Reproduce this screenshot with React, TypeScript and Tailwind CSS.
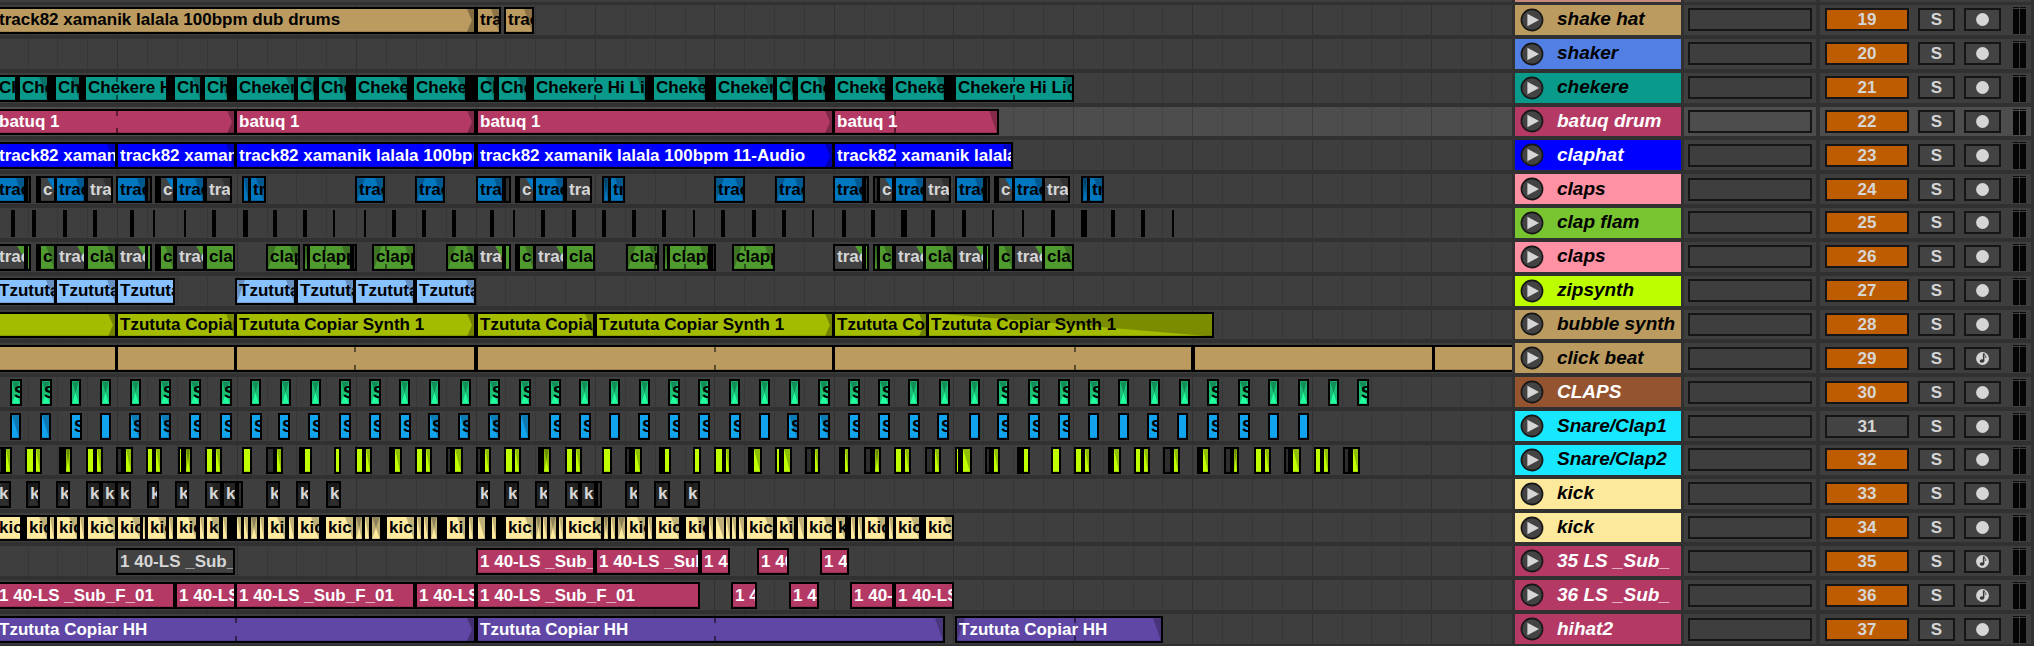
type Fade = "" | "x" | "r" | "l" | "lr" | "long" | "cut";
// left edge, right edge, tone, label, fade
type Clip = [number, number, string, string?, Fade?];

interface Track {
  number: number;
  name: string;
  header: string;
  clips: Clip[];
  gaps?: [number, number][];
  notches?: number[];
  muted?: boolean;
  midi?: boolean;
  selected?: boolean;
}

const TONES: Record<string, string> = {
  sand: "bg-[#bb9b5f] text-black",
  teal: "bg-[#0a9a8c] text-black",
  rose: "bg-[#b43a65] text-white",
  blue: "bg-[#0000ff] text-white",
  azure: "bg-[#0077be] text-black",
  gray: "bg-[#424242] text-[#d6d6d6]",
  dark: "bg-[#2e2e2e] text-[#d6d6d6]",
  green: "bg-[#509b2f] text-black",
  sky: "bg-[#87c1ff] text-black",
  olive: "bg-[#a3bc00] text-black",
  mint: "bg-[#22ff9e] text-black",
  cyan: "bg-[#12a3ef] text-black",
  lime: "bg-[#bfff00] text-black",
  cream: "bg-[#ffeb9f] text-black",
  violet: "bg-[#6047a6] text-white",
  black: "bg-black text-black",
};

const BEAT = 119.45 / 4;
const GRID_LINES = Array.from({ length: 80 }, (_, i) => ({
  left: Math.round(27.6 + i * BEAT),
  strong: i % 4 === 3,
}));

const hits = (tone: string, starts: string, width: number, fade: Fade): Clip[] =>
  starts.split(" ").map((token) => {
    const lettered = token.includes("s");
    const start = parseInt(token, 10);
    const end = start + width + (lettered ? 1 : 0) - 1;
    return [start + 2, end, tone, lettered ? "S" : "", token.includes("f") ? "r" : fade];
  });

const slots = (tone: string, spec: string): Clip[] =>
  spec.split(" ").map((token) => {
    const [range, label = "", fade = ""] = token.split(":");
    const [l, r] = range.split("_").map(Number);
    return [l, r, tone, label, fade as Fade];
  });

// g = lime, r = lime with fade, x = lime with double fade, k = muted, b = black
const snare = (spec: string): Clip[] =>
  spec.split(" ").map((token) => {
    const kind = token[0];
    const [l, r] = token.slice(1).split("_").map(Number);
    const tone = kind === "k" ? "dark" : kind === "b" ? "black" : "lime";
    return [l, r, tone, "", kind === "r" ? "r" : kind === "x" ? "lr" : ""];
  });

const flams: [number, number][] = [
  [11, 4], [32, 4], [63, 4], [93, 4], [130, 4], [153, 2], [184, 2], [212, 4], [243, 5], [273, 4],
  [303, 4], [333, 2], [364, 2], [392, 4], [422, 4], [452, 4], [490, 4], [513, 2], [541, 4], [572, 4],
  [602, 4], [632, 4], [662, 4], [693, 2], [721, 4], [752, 4], [782, 4], [812, 2], [842, 4], [871, 4],
  [901, 6], [931, 4], [962, 4], [992, 2], [1022, 2], [1051, 4], [1081, 6], [1111, 4], [1141, 4], [1172, 2],
];

const SUB = "1 40-LS _Sub_F_01";
const SYNTH = "Tzututa Copiar Synth 1";
const HH = "Tzututa Copiar HH";
const DRUMS = "track82 xamanik lalala 100bpm";

const TRACKS: Track[] = [
  {
    number: 19, name: "shake hat", header: "bg-[#bb9b5f] text-black",
    clips: [
      [-3, 474, "sand", `${DRUMS} dub drums`, "x"],
      [478, 499, "sand", "track82", "r"],
      [506, 532, "sand", "track82", "r"],
    ],
  },
  { number: 20, name: "shaker", header: "bg-[#527fe3] text-black", clips: [] },
  {
    number: 21, name: "chekere", header: "bg-[#0a9a8c] text-black", gaps: [[0, 1074]], notches: [117, 595, 1014],
    clips: [
      [-3, 15, "teal", "Chekere"], [20, 47, "teal", "Chekere", "r"], [56, 79, "teal", "Chekere", "r"],
      [86, 166, "teal", "Chekere Hi"], [175, 200, "teal", "Chekere", "r"], [205, 227, "teal", "Chekere", "r"],
      [237, 294, "teal", "Chekere", "r"], [298, 314, "teal", "Chekere", "r"], [319, 346, "teal", "Chekere", "r"],
      [356, 407, "teal", "Chekere", "r"], [414, 465, "teal", "Chekere", "r"], [478, 494, "teal", "Chekere", "r"],
      [499, 526, "teal", "Chekere", "r"], [534, 645, "teal", "Chekere Hi Lid", "r"], [654, 705, "teal", "Chekere", "r"],
      [716, 773, "teal", "Chekere", "r"], [777, 793, "teal", "Chekere", "r"], [798, 825, "teal", "Chekere", "r"],
      [835, 885, "teal", "Chekere", "r"], [893, 944, "teal", "Chekere", "r"], [956, 1072, "teal", "Chekere Hi Lid", "r"],
    ],
  },
  {
    number: 22, name: "batuq drum", header: "bg-[#b43a65] text-white", selected: true, notches: [117, 895],
    clips: [
      [-3, 234, "rose", "batuq 1", "x"], [237, 474, "rose", "batuq 1", "x"],
      [478, 832, "rose", "batuq 1", "x"], [835, 997, "rose", "batuq 1", "r"],
    ],
  },
  {
    number: 23, name: "claphat", header: "bg-[#0000ff] text-white", notches: [895],
    clips: [
      [-3, 115, "blue", DRUMS, "r"], [118, 234, "blue", DRUMS, "r"], [237, 474, "blue", DRUMS],
      [478, 832, "blue", `${DRUMS} 11-Audio`, "x"], [835, 1011, "blue", DRUMS, "r"],
    ],
  },
  {
    number: 24, name: "claps", header: "bg-[#ff91a4] text-black",
    gaps: [[36, 42], [155, 162], [515, 521], [873, 881], [994, 1000], [25, 31], [146, 152], [504, 511], [863, 869], [984, 990]],
    clips: [
      [-3, 24, "azure", "trac", "r"], [28, 29, "dark"],
      [41, 54, "gray", "c", "cut"], [57, 84, "azure", "trac", "r"], [88, 111, "gray", "tra", "r"],
      [118, 145, "azure", "trac", "r"], [148, 150, "dark"],
      [161, 173, "gray", "c", "cut"], [177, 203, "azure", "trac", "r"], [207, 230, "gray", "tra", "r"],
      [244, 248, "azure", "", "r"], [251, 264, "azure", "tr", "r"],
      [357, 383, "azure", "trac", "lr"], [417, 443, "azure", "trac", "lr"],
      [478, 502, "azure", "tra", "r"], [506, 509, "dark"],
      [520, 533, "gray", "c", "cut"], [536, 563, "azure", "trac", "r"], [567, 590, "gray", "tra"],
      [604, 608, "azure", "", "lr"], [611, 623, "azure", "tr", "r"],
      [716, 743, "azure", "trac", "lr"], [777, 803, "azure", "trac", "lr"],
      [835, 862, "azure", "trac", "r"], [866, 867, "dark"], [875, 877, "dark"],
      [880, 892, "gray", "c", "cut"], [896, 923, "azure", "trac", "r"], [926, 949, "gray", "tra", "r"],
      [957, 983, "azure", "trac", "r"], [987, 988, "dark"],
      [999, 1012, "gray", "c", "cut"], [1015, 1042, "azure", "trac", "r"], [1045, 1068, "gray", "tra", "r"],
      [1083, 1087, "azure", "", "lr"], [1090, 1102, "azure", "tr", "r"],
    ],
  },
  {
    number: 25, name: "clap flam", header: "bg-[#79c431] text-black", clips: [],
    gaps: flams.map(([x, w]) => [x, x + w]),
  },
  {
    number: 26, name: "claps", header: "bg-[#ff91a4] text-black", notches: [325, 386, 655, 685, 745],
    gaps: [[36, 42], [155, 162], [515, 521], [873, 881], [994, 1000], [25, 31], [146, 152], [504, 511], [863, 869], [984, 990], [307, 311], [350, 357], [666, 671], [709, 716]],
    clips: [
      [-3, 24, "gray", "trac", "cut"], [28, 29, "green"],
      [41, 54, "green", "c", "r"], [57, 84, "gray", "trac", "cut"], [88, 115, "green", "cla", "r"],
      [118, 145, "gray", "trac", "cut"], [148, 150, "green"],
      [161, 173, "green", "c", "r"], [177, 203, "gray", "trac", "cut"], [207, 233, "green", "cla"],
      [268, 298, "green", "clap", "lr"], [305, 307, "green", "", "lr"], [310, 350, "green", "clapp", "r"], [354, 355, "dark"],
      [374, 413, "green", "clapp", "lr"],
      [448, 474, "green", "cla", "lr"], [478, 502, "gray", "trac", "cut"], [506, 509, "green"],
      [520, 533, "green", "c", "r"], [536, 563, "gray", "trac", "cut"], [567, 593, "green", "cla"],
      [628, 657, "green", "clap", "lr"], [665, 667, "green", "", "lr"], [670, 708, "green", "clapp", "r"], [713, 714, "dark"],
      [734, 773, "green", "clapp", "lr"],
      [835, 862, "gray", "trac", "cut"], [866, 867, "green"], [875, 877, "green", "", "lr"],
      [880, 892, "green", "c", "r"], [896, 923, "gray", "trac", "cut"], [926, 953, "green", "cla", "r"],
      [957, 983, "gray", "trac", "cut"], [987, 988, "green"],
      [999, 1012, "green", "c", "r"], [1015, 1042, "gray", "trac", "cut"], [1045, 1072, "green", "cla", "r"],
    ],
  },
  {
    number: 27, name: "zipsynth", header: "bg-[#bdff00] text-black",
    clips: [
      [-3, 54, "sky", "Tzututa", "r"], [57, 115, "sky", "Tzututa", "r"], [118, 173, "sky", "Tzututa"],
      [237, 294, "sky", "Tzututa", "lr"], [298, 353, "sky", "Tzututa", "r"], [356, 413, "sky", "Tzututa", "r"],
      [417, 474, "sky", "Tzututa", "r"],
    ],
  },
  {
    number: 28, name: "bubble synth", header: "bg-[#bb9b5f] text-black",
    clips: [
      [-3, 115, "olive", "", "x"], [118, 234, "olive", SYNTH, "r"], [237, 474, "olive", SYNTH, "x"],
      [478, 593, "olive", SYNTH, "r"], [597, 832, "olive", SYNTH, "x"], [835, 926, "olive", SYNTH, "x"],
      [929, 1212, "olive", SYNTH, "long"],
    ],
  },
  {
    number: 29, name: "click beat", header: "bg-[#bb9b5f] text-black", midi: true, notches: [355, 715, 1075],
    clips: [
      [-3, 115, "sand"], [118, 234, "sand"], [237, 474, "sand"], [478, 832, "sand"],
      [835, 1191, "sand"], [1195, 1432, "sand"], [1435, 1700, "sand"],
    ],
  },
  {
    number: 30, name: "CLAPS", header: "bg-[#955430] text-white",
    clips: hits("mint", "10s 40s 70 100 130 159s 189s 220s 250 280 310 339s 369s 399 429 460 488s 519s 549s 579 609 639 668s 698s 729 759 789 818s 848s 878s 908 939 969 997s 1028s 1058s 1088s 1118 1149 1179 1207s 1238s 1268 1298 1328 1357s", 10, "lr"),
  },
  {
    number: 31, name: "Snare/Clap1", header: "bg-[#17e7ff] text-black", muted: true,
    clips: hits("cyan", "10f 40f 70s 100 129sf 159sf 189s 220s 250s 278s 308s 339s 369s 399s 428sf 458sf 488sf 519f 549s 579s 609 638s 668s 698s 729s 759 787sf 818sf 848s 878s 908s 937s 969 997s 1028s 1058s 1088 1118 1147s 1177 1207s 1238s 1268 1298", 10, ""),
  },
  {
    number: 32, name: "Snare/Clap2", header: "bg-[#17e7ff] text-black",
    clips: snare(
      "k-1_2 b3_5 r6_10 g27_33 r36_40 b61_64 x66_70 g88_93 r97_101 k118_122 b123_125 r126_131 g148_152 r156_160 g180_182 b183_185 x186_190 g207_212 r216_220 g244_250 k268_273 r277_281 b301_304 g305_310 g336_339 g357_362 r366_370 b391_394 r395_400 g417_422 r426_430 k448_451 b452_454 r455_461 k478_481 b482_484 r485_489 g506_512 r515_519 b540_543 x544_549 g567_572 r576_580 g604_610 k627_630 b631_634 r635_640 b661_664 g665_669 g695_699 g716_722 r726_729 b750_753 r754_760 g777_780 b781_783 r784_790 k807_811 r815_818 b841_844 r845_848 k866_871 b872_874 x875_879 g896_901 r905_909 k927_932 r935_939 g957_960 b960_962 r963_970 k987_990 b991_993 r994_998 g1019_1021 b1021_1023 g1024_1028 g1053_1059 g1076_1081 r1085_1089 b1110_1113 r1114_1119 g1136_1140 r1144_1148 k1165_1170 r1174_1178 b1199_1202 r1203_1208 k1226_1231 b1232_1233 x1234_1237 g1256_1261 r1265_1269 k1286_1289 b1290_1292 r1293_1299 g1316_1320 r1324_1328 k1345_1350 b1350_1352 r1353_1358",
    ),
  },
  {
    number: 33, name: "kick", header: "bg-[#fde99c] text-black",
    clips: slots("dark", "-3_9:k:r 28_38:k:lr 58_68:k:lr 88_99:k:r 103_115:k:r 118_129:k:lr 149_157:k:lr 177_187:k:lr 207_220:k:r 224_235:k:r 239_241 268_278:k:lr 298_308:k:lr 328_339:k:lr 478_488:k:lr 506_517:k:lr 537_547:k:lr 567_578:k:r 582_594:k:r 598_600 627_637:k:lr 656_668:k:lr 686_698:k:lr"),
  },
  {
    number: 34, name: "kick", header: "bg-[#fde99c] text-black", gaps: [[0, 954]],
    clips: slots("cream", "-3_20:kic 27_47:kic:r 50_54::r 57_77:kic:r 80_84::r 88_115:kic:r 118_140:kic:r 143_145::r 148_166:kic:r 169_173::r 177_196:kic:r 200_204::r 207_219:k:r 223_227::r 237_241::r 244_248::r 251_257::lr 260_264::r 268_285:ki:r 289_294::r 298_319:kic:r 326_353:kic:r 356_362::lr 365_369::r 372_380::lr 387_414:kic:r 417_421::r 424_428::r 431_437::lr 447_465:ki:r 469_473::r 478_485::r 492_496::r 506_533:kic:r 536_541::lr 543_547::r 550_556::lr 559_563::r 566_601:kick:r 604_608::lr 611_615::r 618_625::lr 627_645:kic:r 648_652::r 656_679:kic:r 686_705:kic:r 709_713::r 716_724::r 726_730::r 732_736::r 739_744::r 747_773:kic:r 777_794:kic:r 798_804::r 807_832:kic:r 836_845:k:r 851_855::r 858_862::r 865_885:kic:r 889_893::r 896_919:kic:r 926_952:kic:r"),
  },
  {
    number: 35, name: "35 LS _Sub_", header: "bg-[#b43a65] text-white", midi: true,
    clips: [
      [118, 233, "gray", SUB], [478, 593, "rose", SUB], [597, 698, "rose", SUB], [702, 728, "rose", "1 4"],
      [759, 787, "rose", "1 40"], [822, 847, "rose", "1 4"],
    ],
  },
  {
    number: 36, name: "36 LS _Sub_", header: "bg-[#b43a65] text-white", midi: true,
    clips: [
      [-3, 173, "rose", SUB], [177, 234, "rose", SUB], [237, 413, "rose", SUB], [417, 474, "rose", SUB],
      [478, 698, "rose", SUB], [733, 755, "rose", "1 40"], [791, 817, "rose", "1 4"], [852, 892, "rose", SUB],
      [896, 952, "rose", SUB],
    ],
  },
  {
    number: 37, name: "hihat2", header: "bg-[#b43a65] text-white", notches: [236, 715, 1075],
    clips: [
      [-3, 474, "violet", HH, "x"], [478, 943, "violet", HH, "r"], [957, 1161, "violet", HH, "lr"],
    ],
  },
];

function FadeShape({ fade, narrow, underlay }: { fade: Fade; narrow: boolean; underlay: string }) {
  if (fade === "x")
    return <i className="absolute inset-y-0 right-0 w-[7px] bg-black/30 [clip-path:polygon(0_0,100%_0,100%_100%,0_100%,70%_50%)]" />;
  if (fade === "long")
    return <i className="absolute inset-0 bg-black/25 [clip-path:polygon(3%_0,100%_0,100%_100%)]" />;
  if (fade === "cut")
    return <i className={`absolute top-0 right-0 h-3 w-[7px] [clip-path:polygon(0_0,100%_0,100%_100%)] ${underlay}`} />;
  const width = narrow ? "w-full" : "w-[8px]";
  return (
    <>
      {fade.includes("r") && (
        <i className={`absolute inset-y-0 right-0 bg-black/25 [clip-path:polygon(0_0,100%_0,100%_100%)] ${width}`} />
      )}
      {fade.includes("l") && (
        <i className={`absolute inset-y-0 left-0 bg-black/25 [clip-path:polygon(0_0,100%_0,0_100%)] ${width}`} />
      )}
    </>
  );
}

function Lane({ track }: { track: Track }) {
  const underlay = track.number === 24 ? "bg-[#0077be]" : "bg-[#509b2f]";
  return (
    <div className={`relative min-h-0 overflow-hidden ${track.selected ? "bg-[#4d4d4d]" : "bg-[#3e3e3e]"}`}>
      {GRID_LINES.map(({ left, strong }) => (
        <i key={left} className={`absolute inset-y-0 w-px ${strong ? "bg-black/20" : "bg-black/10"}`} style={{ left }} />
      ))}
      {track.gaps?.map(([a, b]) => (
        <i key={a} className="absolute top-[2px] bottom-[1px] bg-black" style={{ left: a, width: b - a }} />
      ))}
      {track.clips.map(([l, r, tone, label, fade]) => (
        <div
          key={l}
          className="absolute top-[2px] bottom-[1px] border-2 border-black"
          style={{ left: l - 2, width: r - l + 4 }}
        >
          <div className={`relative flex h-full items-center overflow-hidden shadow-[inset_0_-1px_0_rgba(0,0,0,0.15)] ${TONES[tone]}`}>
            {fade && <FadeShape fade={fade} narrow={r - l < 12} underlay={underlay} />}
            {label && <span className="relative pl-[2px] text-[17px] leading-5 font-bold whitespace-nowrap">{label}</span>}
          </div>
        </div>
      ))}
      {track.notches?.map((x) => (
        <span key={x} className="absolute top-[4px] bottom-[3px] flex w-[2px] flex-col justify-between" style={{ left: x - 1 }}>
          <i className="h-[5px] bg-black/50" />
          <i className="h-[5px] bg-black/50" />
        </span>
      ))}
    </div>
  );
}

function PlayIcon() {
  return (
    <svg viewBox="0 0 24 24" className="size-6" aria-hidden="true">
      <circle cx="12" cy="12" r="10.6" fill="#434343" stroke="#161616" strokeWidth="1.6" />
      <path d="M7.4 5.7 L19 12 L7.4 18.3 Z" fill="#d6d6d6" />
    </svg>
  );
}

function ArmIcon({ midi }: { midi?: boolean }) {
  return (
    <svg viewBox="0 0 13 13" className="size-[13px]" aria-hidden="true">
      <circle cx="6.5" cy="6.5" r="6.4" fill="#d6d6d6" />
      {midi && (
        <>
          <path d="M6.9 1.4 H8.4 V8.8 H6.9 Z" fill="#3a3a3a" />
          <ellipse cx="6" cy="9" rx="2.3" ry="1.7" fill="#3a3a3a" />
          <path d="M8.2 1.6 C8.6 3.4 10.2 3.6 9.8 6" fill="none" stroke="#3a3a3a" strokeWidth="0.9" />
        </>
      )}
    </svg>
  );
}

function Meter() {
  return (
    <span className="flex h-full w-[6px] flex-col gap-px">
      <i className="h-px bg-[#0a0a0a]" />
      <i className="flex-1 bg-[#050505]" />
    </span>
  );
}

function Header({ track }: { track: Track }) {
  const panel = track.selected ? "bg-[#4d4d4d]" : "bg-[#3e3e3e]";
  const control = "flex h-[23px] items-center justify-center border-2 border-[#151515] text-[17px] font-bold leading-none text-[#d6d6d6]";
  return (
    <div className="flex min-h-0">
      <div className={`flex w-[166px] items-center gap-[13px] overflow-hidden pl-[5px] ${track.header}`}>
        <button type="button" aria-label={`Play ${track.name}`} className="shrink-0">
          <PlayIcon />
        </button>
        <span className="pb-px text-[19px] leading-6 font-bold whitespace-nowrap italic">{track.name}</span>
      </div>
      <div className={`ml-[3px] flex w-[132px] items-center px-1 ${panel}`}>
        <div className="h-[23px] w-full border-2 border-[#151515]" />
      </div>
      <div className={`ml-1 flex w-[211px] items-center pl-[5px] ${panel}`}>
        <button
          type="button"
          aria-pressed={!track.muted}
          className={`${control} w-[84px] ${track.muted ? "bg-[#434343]" : "bg-[#bd5c00]"}`}
        >
          {track.number}
        </button>
        <button type="button" className={`${control} ml-[9px] w-[37px] bg-[#434343]`}>S</button>
        <button type="button" aria-label={`Arm ${track.name}`} className={`${control} ml-[9px] w-[37px] bg-[#434343]`}>
          <ArmIcon midi={track.midi} />
        </button>
        <div className="ml-3 flex h-full gap-px pt-[2px] pb-px">
          <Meter />
          <Meter />
        </div>
      </div>
    </div>
  );
}

export default function App() {
  return (
    <main className="flex h-screen min-h-[600px] flex-col overflow-hidden bg-[#313131] font-['Liberation_Sans',Arial,sans-serif]">
      <div className="flex h-[2px] shrink-0 pr-[3px]">
        <div className="flex-1 bg-[#3e3e3e]" />
        <div className="ml-[3px] w-[166px] bg-[#c98a7e]" />
        <div className="ml-[3px] w-[132px] bg-[#3e3e3e]" />
        <div className="ml-1 w-[211px] bg-[#3e3e3e]" />
      </div>
      <div className="flex min-h-0 flex-1 gap-[3px] pt-[3px] pr-[3px] pb-[2px]">
        <div className="grid min-w-0 flex-1 auto-rows-fr gap-1">
          {TRACKS.map((track) => (
            <Lane key={track.number} track={track} />
          ))}
        </div>
        <div className="grid shrink-0 auto-rows-fr gap-1">
          {TRACKS.map((track) => (
            <Header key={track.number} track={track} />
          ))}
        </div>
      </div>
    </main>
  );
}
